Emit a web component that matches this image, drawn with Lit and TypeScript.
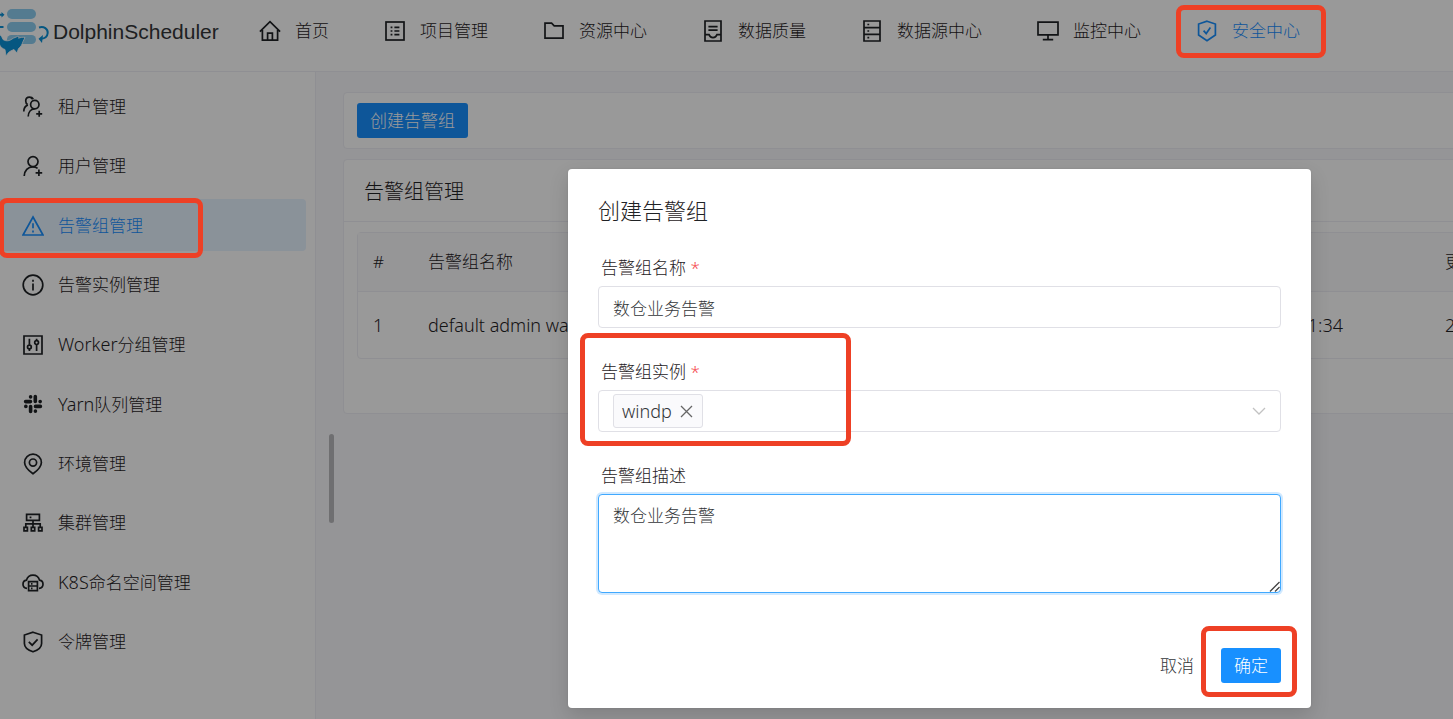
import { LitElement, html, css, svg, nothing } from "lit";
import type { SVGTemplateResult } from "lit";
import { customElement, property, state } from "lit/decorators.js";
import { classMap } from "lit/directives/class-map.js";

const icons: Record<string, SVGTemplateResult> = {
  home: svg`<path d="M.9 11.7 11 1.6l10.1 10.1M3.4 10v10.2h15.2V10M8.6 20v-6.8h4.8V20"/>`,
  profile: svg`<rect x="2" y="2" width="18" height="18"/><path d="M10.4 7.4h5M10.4 11h5M10.4 14.600h5M6.600 7.400h1.800M6.600 11h1.800M6.600 14.600h1.800"/>`,
  folder: svg`<path d="M2 3.200h6.600l2.600 2.600H20v12.400H2z"/>`,
  container: svg`<path d="M3 1h16v20H3zM6.400 6.600h9.200M6.400 10.200h9.200M3 14.600h4c.6 2 2.200 3 4 3s3.400-1 4-3h4"/>`,
  database: svg`<path d="M3 1h16v20H3zM3 7.700h16M3 14.300h16M6.400 4.500h1.800M6.400 11h1.800M6.400 17.600h1.800"/>`,
  desktop: svg`<path d="M1 2.200h20v12.600H1zM11 15v4.600M5.800 19.600h10.400"/>`,
  certificate: svg`<path d="M11 1.200 19.400 4v11L11 20.800 2.600 15V4zM7.600 10.600l2.600 3 4.200-6"/>`,
  group: svg`<circle cx="12.800" cy="8.600" r="4.200"/><path d="M6.200 20.500c.2-4.400 2.800-7.600 6.400-7.600M14.200 17.800h6M17.200 14.800v6M10.400 3.200C9.800 2 8.800 1.200 7.500 1.200 5.300 1.200 3.700 2.900 3.700 5.100c0 1.600.8 2.900 2 3.600M5.900 8.900C3.400 9.900 1.800 12.400 1.800 15.600M7.500 1.200c1.800 0 3 .6 3.800 1.800"/>`,
  user: svg`<circle cx="11" cy="6.600" r="5"/><path d="M2.200 21c.2-5.400 3.800-9.200 8.600-9.200 2 0 3.600.6 4.800 1.600M13.600 17.800h6.600M16.900 14.500v6.600"/>`,
  warning: svg`<path d="M11 2 21 20H1zM11 8.200v5M11 15.400v2"/>`,
  info: svg`<circle cx="11" cy="11" r="9.800"/><path d="M11 9.600v6.800M11 5.800v2"/>`,
  control: svg`<path d="M2 2h18v18H2zM7.400 4.800v6M7.400 15v2M14.600 4.800v1.600M14.600 10.800V17"/><circle cx="7.400" cy="13" r="1.900"/><circle cx="14.600" cy="8.600" r="1.900"/>`,
  slack: svg`<path stroke-width="3.600" stroke-linecap="round" d="M13.300 3.600v4.900M18.100 8.600h.1M3.600 8.600h4.900M8.600 3.800v.1M8.600 13.500v4.900M3.800 13.400h.1M13.500 13.400h4.900M13.400 18.100v.1"/>`,
  environment: svg`<path d="M11 20.800c-4.600-3.400-8.400-7-8.400-11.400a8.400 8.200 0 0 1 16.800 0c0 4.400-3.800 8-8.400 11.400z"/><circle cx="11" cy="9.600" r="3.600"/>`,
  cluster: svg`<path d="M4.600 2.400h12.800v6H4.600zM7.600 5.400h1.800M11 8.400v7M3.800 15v-3.200h14.400V15"/><path d="M2 15.400h3.400v3.400H2zM9.300 15.400h3.400v3.400H9.300zM16.600 15.400H20v3.400h-3.400z"/>`,
  cloud: svg`<path d="M5 16.400C2.800 16.200 1 14.600 1 12.200c0-2 1.400-3.600 3.400-4C5.400 5 8 3.200 11 3.200s5.600 1.800 6.600 5c2 .4 3.400 2 3.400 4 0 2.400-1.800 4-4 4.200M6.600 9.600h8.800v9H6.600zM6.600 14h8.800M9 11.900h1.500M9 16.300h1.500"/>`,
  shield: svg`<path d="M11 1.200 19.600 4v8.400c0 4-4 6.800-8.600 8.400-4.600-1.600-8.600-4.400-8.600-8.400V4zM6.800 10.800l3.400 3.400 5.400-5.800"/>`,
};

@customElement("ds-icon")
export class DsIcon extends LitElement {
  @property() name = "";

  static styles = css`
    :host {
      display: inline-flex;
      flex: none;
      width: 22px;
      height: 22px;
    }
    .glyph {
      width: 22px;
      height: 22px;
      fill: none;
      stroke: currentColor;
      stroke-width: 1.7;
    }
  `;

  render() {
    return html`<svg class="glyph" viewBox="0 0 22 22" aria-hidden="true">${icons[this.name] ?? nothing}</svg>`;
  }
}

interface Entry {
  icon: string;
  text: string;
  latin?: string;
  active?: boolean;
}

const topMenu: Entry[] = [
  { icon: "home", text: "首页" },
  { icon: "profile", text: "项目管理" },
  { icon: "folder", text: "资源中心" },
  { icon: "container", text: "数据质量" },
  { icon: "database", text: "数据源中心" },
  { icon: "desktop", text: "监控中心" },
  { icon: "certificate", text: "安全中心", active: true },
];

const sideMenu: Entry[] = [
  { icon: "group", text: "租户管理" },
  { icon: "user", text: "用户管理" },
  { icon: "warning", text: "告警组管理", active: true },
  { icon: "info", text: "告警实例管理" },
  { icon: "control", latin: "Worker", text: "分组管理" },
  { icon: "slack", latin: "Yarn", text: "队列管理" },
  { icon: "environment", text: "环境管理" },
  { icon: "cluster", text: "集群管理" },
  { icon: "cloud", latin: "K8S", text: "命名空间管理" },
  { icon: "shield", text: "令牌管理" },
];

@customElement("app-root")
export class AppRoot extends LitElement {
  @state() private tags = ["windp"];

  static styles = css`
    :host {
      display: block;
      position: relative;
      height: 100vh;
      overflow: hidden;
      font: 300 17px/26px "Noto Sans", "Noto Sans CJK SC", sans-serif;
      color: #333639;
      background: #f8f8fc;
    }
    * {
      box-sizing: border-box;
    }
    button,
    input,
    select,
    textarea {
      font: inherit;
      color: inherit;
      margin: 0;
    }
    a {
      color: inherit;
      text-decoration: none;
    }
    .latin {
      font-size: 18px;
    }
    .page {
      display: flex;
      flex-direction: column;
      height: 100%;
      color: #1f2225;
    }
    .header {
      display: flex;
      align-items: center;
      height: 72px;
      flex: none;
      padding-bottom: 10px;
      background: #fff;
      border-bottom: 1px solid #efeff5;
    }
    .brand {
      display: flex;
      align-items: center;
      gap: 4px;
      width: 259px;
      flex: none;
      padding-top: 3px;
      font: 21px/26px "Liberation Sans", Arial, sans-serif;
      color: #333639;
    }
    .logo {
      width: 49px;
      height: 54px;
      flex: none;
    }
    .topnav {
      display: flex;
      gap: 55px;
      white-space: nowrap;
    }
    .toplink {
      display: flex;
      align-items: center;
      gap: 14px;
    }
    .active {
      color: #1890ff;
    }
    .body {
      display: flex;
      flex: 1;
      min-height: 0;
    }
    .sidebar {
      display: flex;
      flex-direction: column;
      justify-content: space-between;
      width: 316px;
      flex: none;
      padding: 8px 9px 52px 0;
      background: #fff;
      border-right: 1px solid #efeff5;
    }
    .sidelink {
      display: flex;
      align-items: center;
      gap: 14px;
      height: 52px;
      padding: 2px 0 0 22px;
      border-radius: 0 4px 4px 0;
    }
    .sidelink.active {
      background: #e7f3ff;
    }
    .main {
      flex: 1;
      min-width: 0;
      overflow: hidden;
      padding: 20px 0 0 27px;
      display: flex;
      flex-direction: column;
      gap: 10px;
    }
    .card {
      min-width: 1200px;
      background: #fff;
      border: 1px solid #efeff5;
      border-radius: 4px 0 0 4px;
    }
    .tools {
      padding: 10px 13px;
    }
    .btn {
      height: 35px;
      padding: 0 13px;
      border: 0;
      border-radius: 3px;
      display: flex;
      align-items: center;
    }
    .primary {
      background: #1890ff;
      color: #fff;
    }
    .title {
      margin: 0;
      padding: 17px 20px 15px;
      font-size: 20px;
      line-height: 29px;
      font-weight: 300;
      border-bottom: 1px solid #efeff5;
    }
    .panel {
      padding: 10px 13px 54px;
    }
    .grid {
      table-layout: fixed;
      width: 1459px;
      border: 1px solid #efeff5;
      border-radius: 4px;
      border-collapse: separate;
      border-spacing: 0;
      text-align: left;
      white-space: nowrap;
    }
    .grid th {
      height: 59px;
      padding: 0 15px;
      font-weight: 300;
      background: #fafafc;
      border-bottom: 1px solid #efeff5;
    }
    .grid td {
      height: 66px;
      padding: 0 15px;
      font-size: 18px;
    }
    .c-index {
      width: 55px;
    }
    .c-text {
      width: 373px;
    }
    .c-time {
      width: 271px;
    }
    .mask {
      position: absolute;
      inset: 0;
      background: rgba(0, 0, 0, 0.4);
    }
    .thumb {
      position: absolute;
      left: 329px;
      top: 434px;
      width: 5px;
      height: 89px;
      border-radius: 5px;
      background: rgba(0, 0, 0, 0.25);
    }
    .dialog {
      position: absolute;
      left: 568px;
      top: 169px;
      width: 743px;
      padding: 26px 30px 25px;
      background: #fff;
      border-radius: 4px;
      box-shadow: 0 8px 20px rgba(0, 0, 0, 0.14), 0 0 2px rgba(0, 0, 0, 0.1);
    }
    .heading {
      margin: 0 0 29px;
      font-size: 22px;
      line-height: 30px;
      font-weight: 300;
      color: #1f2225;
    }
    .field {
      display: flex;
      flex-direction: column;
      gap: 4px;
      margin-bottom: 30px;
    }
    .label {
      line-height: 28px;
      padding-left: 3px;
      color: #1f2225;
    }
    .star {
      color: #f5484e;
    }
    .box {
      width: 100%;
      height: 42px;
      padding: 0 14px;
      border: 1px solid #e0e0e6;
      border-radius: 4px;
      background: #fff;
      outline: none;
    }
    .area {
      height: 99px;
      padding: 8px 14px;
      resize: none;
      display: block;
      border-color: #40a9ff;
      box-shadow: 0 0 0 2px rgba(24, 144, 255, 0.2);
    }
    .stack {
      display: grid;
      align-items: center;
    }
    .stack > * {
      grid-area: 1 / 1;
    }
    .drop {
      appearance: none;
    }
    .tags {
      display: flex;
      gap: 6px;
      margin-left: 15px;
      justify-self: start;
    }
    .tag {
      display: flex;
      align-items: center;
      gap: 8px;
      height: 34px;
      padding: 0 9px 0 8px;
      border: 1px solid #e0e0e6;
      border-radius: 3px;
      background: #fafafc;
      font-size: 18px;
    }
    .close {
      display: flex;
      padding: 0;
      border: 0;
      background: none;
      color: #666;
    }
    .mark {
      fill: none;
      stroke: currentColor;
      stroke-width: 1.3;
      pointer-events: none;
    }
    .arrow {
      justify-self: end;
      margin-right: 15px;
      color: #c2c2c2;
    }
    .grip {
      align-self: end;
      justify-self: end;
      margin: 0 1px 1px 0;
      color: #444;
    }
    .footer {
      display: flex;
      justify-content: flex-end;
      align-items: center;
      gap: 14px;
      padding-top: 25px;
    }
    .plain {
      padding: 0;
      background: none;
      margin-right: 13px;
    }
    .frame {
      position: absolute;
      border: 5px solid #ee4025;
      border-radius: 8px;
      pointer-events: none;
    }
    .frame-nav {
      left: 1176px;
      top: 5px;
      width: 150px;
      height: 53px;
    }
    .frame-side {
      left: -1px;
      top: 198px;
      width: 204px;
      height: 60px;
    }
    .frame-field {
      left: 580px;
      top: 333px;
      width: 271px;
      height: 113px;
    }
    .frame-ok {
      left: 1201px;
      top: 626px;
      width: 96px;
      height: 71px;
    }
  `;

  private logo() {
    return html`<svg class="logo" viewBox="0 5 49 54" aria-hidden="true">
      <g fill="#8dcdf0">
        <rect x="7" y="9" width="29" height="10" rx="5" />
        <rect x="7" y="22" width="29" height="10" rx="5" />
        <rect x="7" y="35" width="29" height="9" rx="4.500" />
      </g>
      <g fill="none" stroke="#0b92d8" stroke-width="2">
        <path d="M0 14.800h3M0 27h3.500" />
        <path d="M39 27.500c5-1.500 9 1.500 8.700 5.500-.3 3.500-3 5.500-6.700 5.800" />
      </g>
      <path fill="#0b92d8" d="M1.500 12l3 2.800-3 2.800zM43 35l-4.500 3.800L42 43z" />
      <path
        fill="#0b92d8"
        stroke="#fff"
        stroke-width=".8"
        d="M-1 34c2 1.500 3 3 4 5.500 3 2 6.500 1.500 9-.5 2-1.500 4-1.500 6-3 1 .5 1 1.500.500 2.200 2-.7 4-1.200 6.500-.7l-2 4c-1 3.500-2.500 5.500-4.500 7l-1.500 4.500-3-3.500c-2.500 1-4.500 2-5.500 3l-2.500 3.500-1-6.500C2 48.500-1 46-1 41z"
      />
    </svg>`;
  }

  private removeTag(tag: string) {
    this.tags = this.tags.filter((t) => t !== tag);
  }

  private links(items: Entry[], base: string) {
    return items.map(
      (item) => html`<a class=${classMap({ [base]: true, active: !!item.active })} href="#">
        <ds-icon name=${item.icon}></ds-icon
        ><span>${item.latin ? html`<span class="latin">${item.latin}</span>` : nothing}${item.text}</span>
      </a>`
    );
  }

  render() {
    return html`
      <div class="page">
        <header class="header">
          <div class="brand">${this.logo()}<span>DolphinScheduler</span></div>
          <nav class="topnav">${this.links(topMenu, "toplink")}</nav>
        </header>
        <div class="body">
          <nav class="sidebar">${this.links(sideMenu, "sidelink")}</nav>
          <main class="main">
            <section class="card tools">
              <button class="btn primary" type="button">创建告警组</button>
            </section>
            <section class="card">
              <h2 class="title">告警组管理</h2>
              <div class="panel">
                <table class="grid">
                  <colgroup>
                    <col class="c-index" />
                    <col class="c-text" />
                    <col class="c-text" />
                    <col class="c-time" />
                    <col class="c-time" />
                    <col />
                  </colgroup>
                  <thead>
                    <tr>
                      <th>#</th>
                      <th>告警组名称</th>
                      <th>告警组描述</th>
                      <th>创建时间</th>
                      <th>更新时间</th>
                      <th>操作</th>
                    </tr>
                  </thead>
                  <tbody>
                    <tr>
                      <td>1</td>
                      <td>default admin warning group</td>
                      <td>default admin warning group</td>
                      <td>2018-11-29 10:11:34</td>
                      <td>2018-11-29 10:11:34</td>
                      <td></td>
                    </tr>
                  </tbody>
                </table>
              </div>
            </section>
          </main>
        </div>
      </div>
      <div class="thumb"></div>
      <div class="mask"></div>

      <form class="dialog" role="dialog" aria-labelledby="heading" @submit=${(e: Event) => e.preventDefault()}>
        <h1 class="heading" id="heading">创建告警组</h1>
        <div class="field">
          <label class="label" for="name">告警组名称 <span class="star">*</span></label>
          <input class="box" id="name" type="text" .value=${"数仓业务告警"} />
        </div>
        <div class="field">
          <label class="label" for="instance">告警组实例 <span class="star">*</span></label>
          <div class="stack">
            <select class="box drop" id="instance">
              <option value=""></option>
            </select>
            <div class="tags">
              ${this.tags.map(
                (tag) => html`<span class="tag"
                  >${tag}
                  <button class="close" type="button" aria-label="remove" @click=${() => this.removeTag(tag)}>
                    <svg class="mark" width="13" height="13" viewBox="0 0 13 13"><path d="M1 1l11 11M12 1 1 12" /></svg>
                  </button>
                </span>`
              )}
            </div>
            <svg class="mark arrow" width="14" height="8" viewBox="0 0 14 8"><path d="M1 1l6 6 6-6" /></svg>
          </div>
        </div>
        <div class="field">
          <label class="label" for="desc">告警组描述</label>
          <div class="stack">
            <textarea class="box area" id="desc" .value=${"数仓业务告警"}></textarea>
            <svg class="mark grip" width="11" height="11" viewBox="0 0 11 11"><path d="M1 10.500 10.500 1M6 10.500l4.500-4.500" /></svg>
          </div>
        </div>
        <div class="footer">
          <button class="btn plain" type="button">取消</button>
          <button class="btn primary" type="submit">确定</button>
        </div>
      </form>

      <div class="frame frame-nav"></div>
      <div class="frame frame-side"></div>
      <div class="frame frame-field"></div>
      <div class="frame frame-ok"></div>
    `;
  }
}
